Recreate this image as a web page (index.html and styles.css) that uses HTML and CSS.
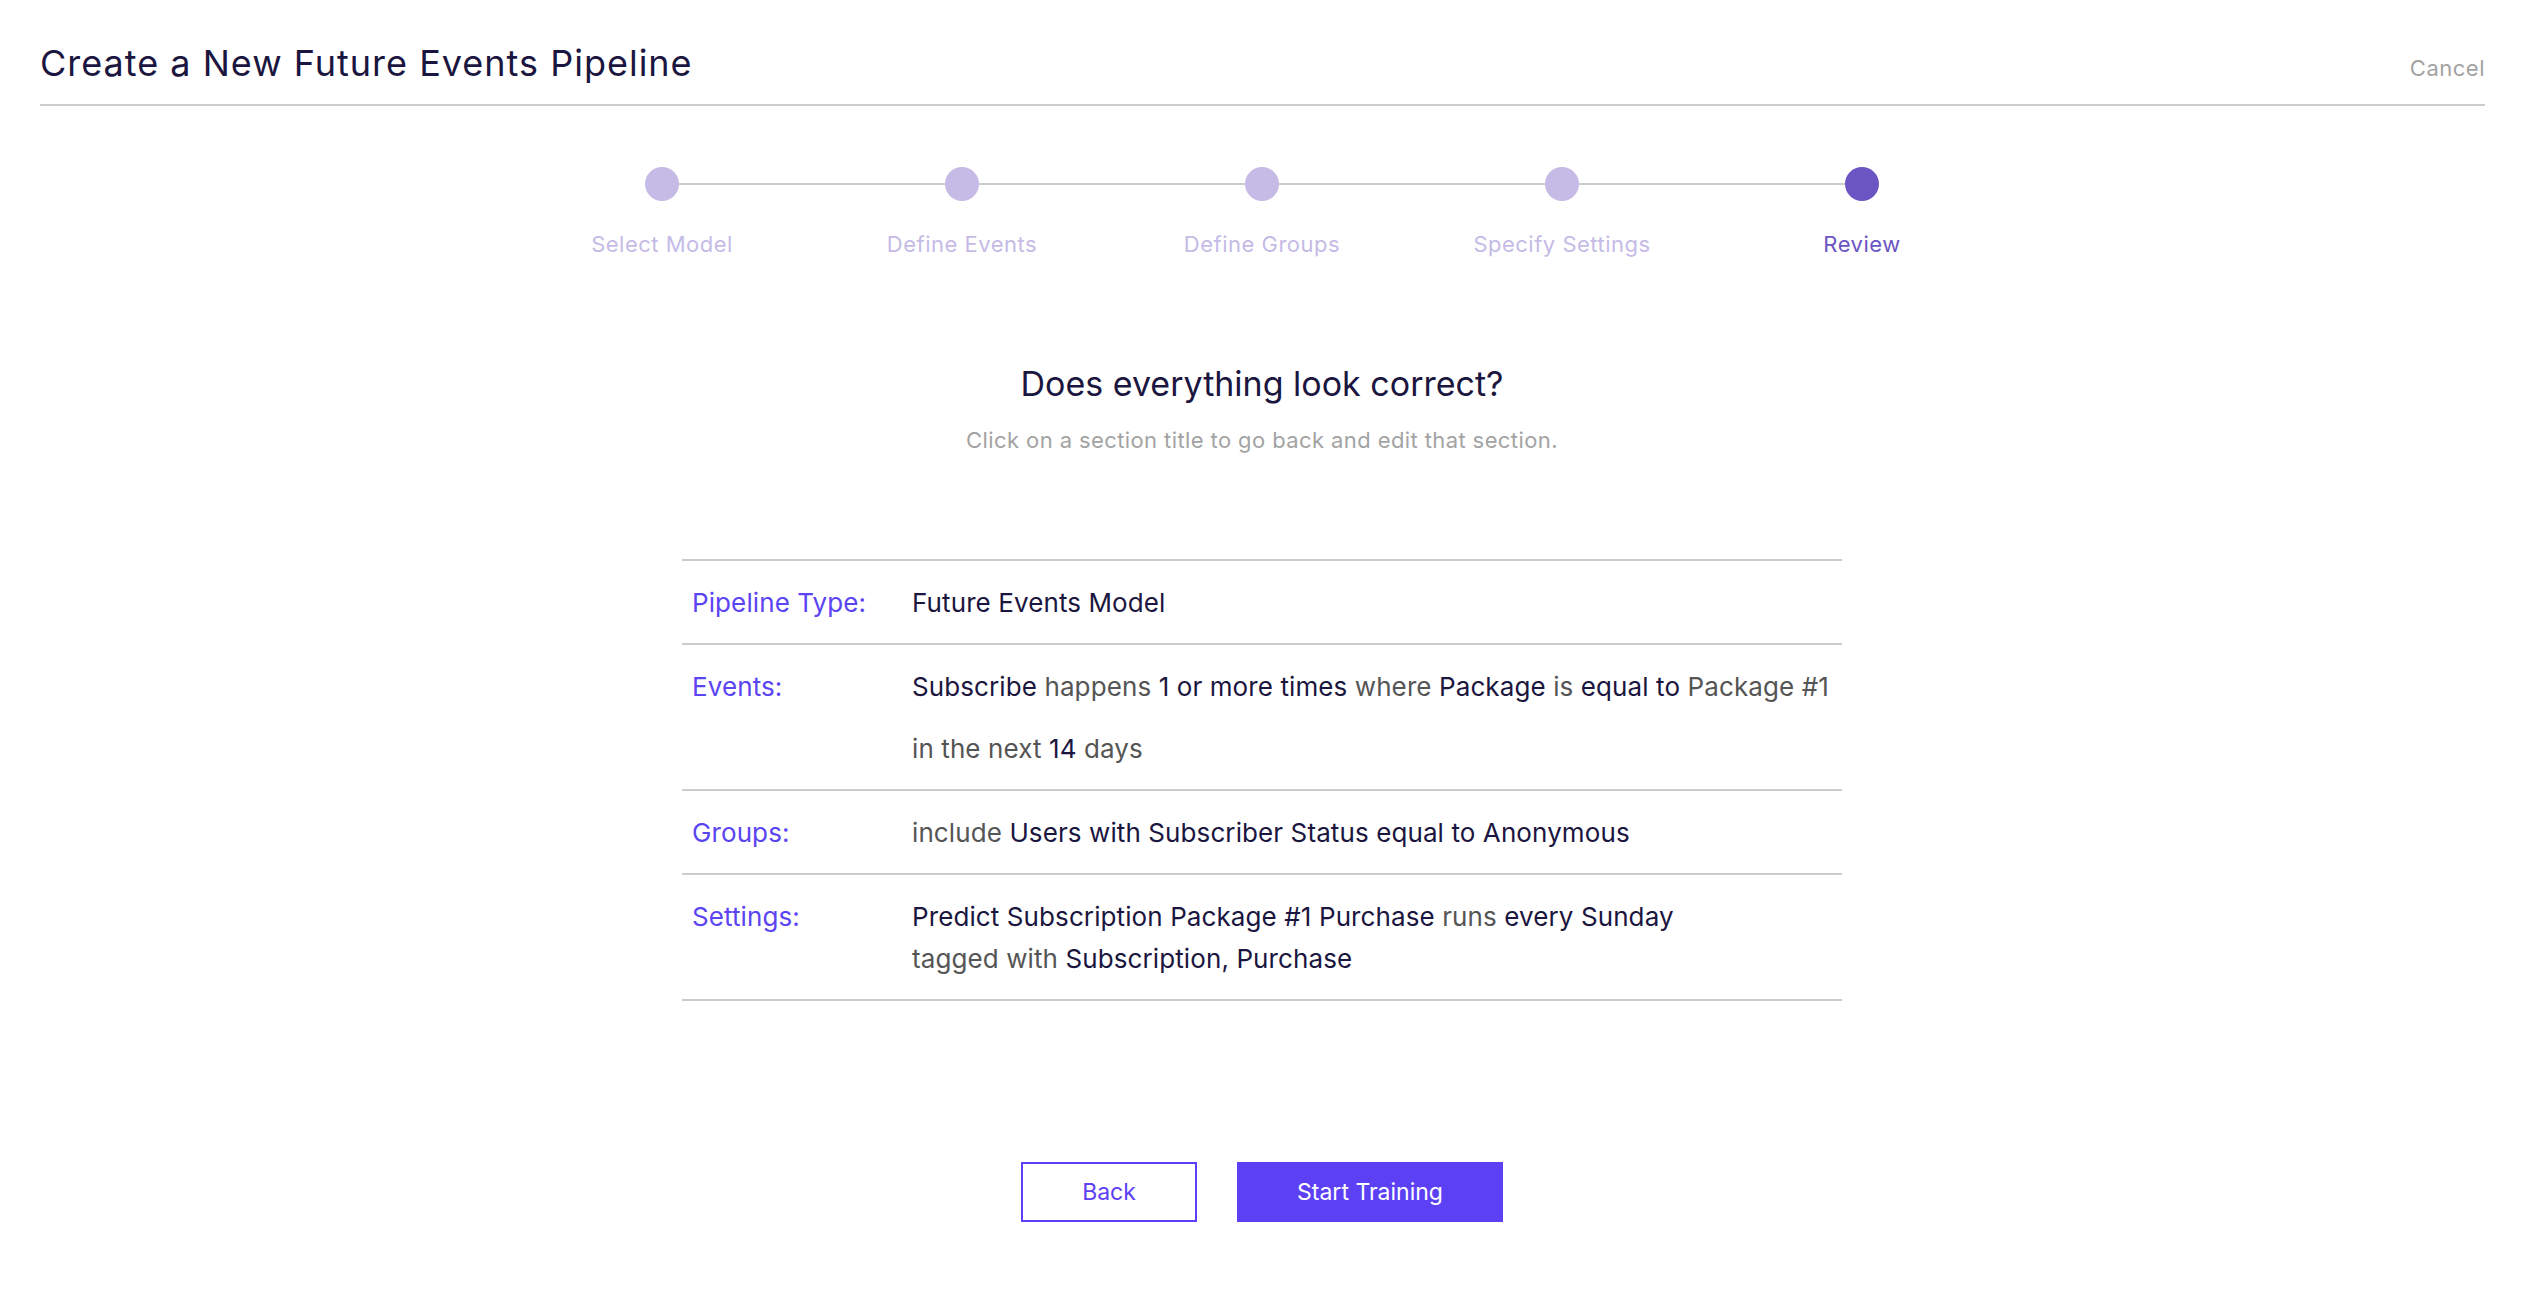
FILE: index.html
```html
<!DOCTYPE html>
<html>
<head>
<meta charset="utf-8">
<link rel="stylesheet" href="styles.css">
</head>
<body>
<header class="top">
  <h1 class="title">Create a New Future Events Pipeline</h1>
  <a class="cancel">Cancel</a>
</header>

<ol class="stepper">
  <li class="step done"><span class="dot"></span><span class="label">Select Model</span></li>
  <li class="step done"><span class="dot"></span><span class="label">Define Events</span></li>
  <li class="step done"><span class="dot"></span><span class="label">Define Groups</span></li>
  <li class="step done"><span class="dot"></span><span class="label">Specify Settings</span></li>
  <li class="step active"><span class="dot"></span><span class="label">Review</span></li>
</ol>

<section class="intro">
  <h2 class="question">Does everything look correct?</h2>
  <p class="hint">Click on a section title to go back and edit that section.</p>
</section>

<div class="review">
  <div class="row">
    <a class="key">Pipeline Type:</a>
    <div class="val"><b>Future Events Model</b></div>
  </div>
  <div class="row">
    <a class="key">Events:</a>
    <div class="val">
      <div class="line"><b>Subscribe</b> happens <b>1 or more times</b> where <b>Package</b> is <b>equal to</b> Package #1</div>
      <div class="line second">in the next <b>14</b> days</div>
    </div>
  </div>
  <div class="row">
    <a class="key">Groups:</a>
    <div class="val">include <b>Users with Subscriber Status equal to Anonymous</b></div>
  </div>
  <div class="row">
    <a class="key">Settings:</a>
    <div class="val">
      <div class="line"><b>Predict Subscription Package #1 Purchase</b> runs <b>every Sunday</b></div>
      <div class="line">tagged with <b>Subscription, Purchase</b></div>
    </div>
  </div>
</div>

<div class="actions">
  <button class="btn ghost">Back</button>
  <button class="btn primary">Start Training</button>
</div>
</body>
</html>
```

FILE: styles.css
```css
* { box-sizing: border-box; }
html, body { margin: 0; padding: 0; background: #fff; }
body {
  font-family: Inter, Lato, "Noto Sans", sans-serif;
  color: #1b1640;
}

.top {
  display: flex;
  justify-content: space-between;
  align-items: baseline;
  margin: 0 39px 0 40px;
  padding-top: 41px;
  height: 106px;
  border-bottom: 2px solid #c9cecc;
}
.title {
  margin: 0;
  font-size: 36px;
  font-weight: 400;
  line-height: 44px;
  letter-spacing: 1px;
  color: #1b1640;
}
.cancel {
  font-size: 22px;
  letter-spacing: 0.5px;
  color: #a3a3a3;
  line-height: 44px;
  cursor: pointer;
}

.stepper {
  list-style: none;
  margin: 61px auto 0;
  padding: 0;
  width: 1500px;
  display: grid;
  grid-template-columns: repeat(5, 300px);
}
.step {
  position: relative;
  display: flex;
  flex-direction: column;
  align-items: center;
}
.step::before {
  content: "";
  position: absolute;
  top: 16px;
  left: 50%;
  width: 300px;
  height: 2px;
  background: #c9cecc;
}
.step:last-child::before { display: none; }
.dot {
  position: relative;
  width: 34px;
  height: 34px;
  border-radius: 50%;
  background: #c5bbe6;
}
.label {
  margin-top: 29px;
  font-size: 22px;
  letter-spacing: 0.5px;
  line-height: 28px;
  color: #c5bbe6;
}
.active .dot { background: #6b55c2; }
.active .label { color: #6b55c2; }

.intro {
  text-align: center;
  margin-top: 104px;
}
.question {
  margin: 0;
  font-size: 34px;
  font-weight: 400;
  line-height: 44px;
  color: #1b1640;
}
.hint {
  margin: 19px 0 0;
  font-size: 22px;
  letter-spacing: 0.4px;
  line-height: 30px;
  color: #a3a3a3;
}

.review {
  width: 1160px;
  margin: 104px auto 0;
  border-top: 2px solid #c9cecc;
}
.row {
  display: grid;
  grid-template-columns: 220px 1fr;
  padding: 21px 0 19px 10px;
  border-bottom: 2px solid #c9cecc;
  font-size: 26px;
  letter-spacing: 0.1px;
  line-height: 42px;
}
.key {
  color: #5b44f2;
  cursor: pointer;
}
.val {
  color: #555555;
}
.line { white-space: nowrap; }
.val b {
  font-weight: 400;
  color: #1b1640;
}
.second { margin-top: 20px; }

.actions {
  display: flex;
  justify-content: center;
  gap: 40px;
  margin-top: 161px;
}
.btn {
  height: 60px;
  font-family: inherit;
  font-size: 23px;
  border: 2px solid #5b40f4;
  cursor: pointer;
}
.ghost {
  width: 176px;
  background: #fff;
  color: #5b40f4;
}
.primary {
  width: 266px;
  background: #5b40f4;
  color: #fff;
}
```
